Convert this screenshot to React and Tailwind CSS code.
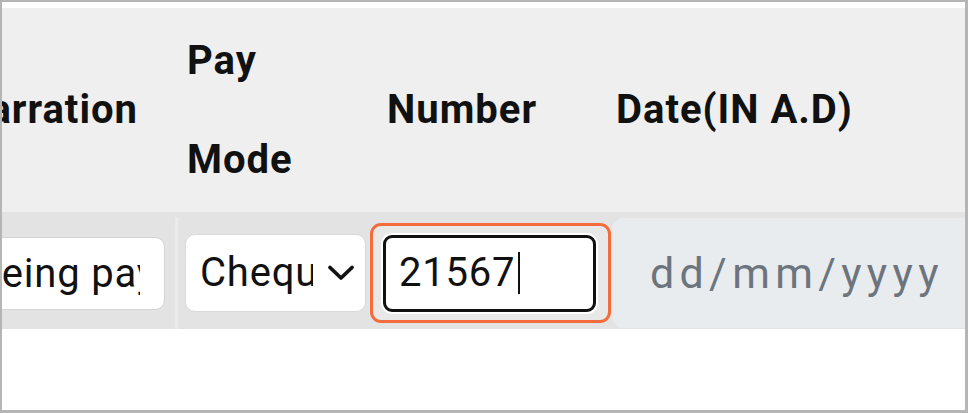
const ChevronDown = () => (
  <svg width="28" height="18" viewBox="0 0 28 18" fill="none">
    <path d="M3 3.5 L14 14 L25 3.5" stroke="#111" strokeWidth="3.8" strokeLinecap="round" strokeLinejoin="round" />
  </svg>
);

export default function App() {
  return (
    <div className="w-[968px] h-[413px] bg-[#b5b5b5] pt-[2px] pl-[2px] pr-[3px] pb-[3px]">
      <div
        className="h-full bg-white overflow-hidden flex flex-col pt-[6px] text-[#111]"
        style={{ fontFamily: "Roboto, 'Liberation Sans', sans-serif" }}
      >
        {/* header */}
        <div className="flex h-[204px] bg-[#efefef] font-bold text-[40px] tracking-[1px] shrink-0">
          <div className="w-[173px] shrink-0 flex items-center justify-end pr-[37px] whitespace-nowrap">
            Narration
          </div>
          <div className="w-[193px] shrink-0 flex items-center pl-[12px]">
            <span className="w-min leading-[99px]">Pay Mode</span>
          </div>
          <div className="w-[244px] shrink-0 flex items-center pl-[19px]">Number</div>
          <div className="flex-1 flex items-center pl-[4px] whitespace-nowrap">Date(IN A.D)</div>
        </div>

        {/* data row */}
        <div className="flex h-[117px] bg-[#e3e3e3] items-center pt-[5px] text-[40px] tracking-[0.8px] shrink-0">
          <div className="w-[173px] shrink-0 h-full flex items-center">
            <input
              readOnly
              value="Being payment"
              className="-ml-[44px] w-[207px] h-[73px] bg-white border border-[#d4d4d4] rounded-[10px] pl-[17px] pr-[24px] outline-none text-[#111]"
            />
          </div>
          <div className="w-[3px] h-full bg-[#ebebeb] shrink-0" />
          <div className="w-[190px] shrink-0 pl-[7px]">
            <div className="w-[181px] h-[78px] bg-white border border-[#d9d9d9] rounded-[10px] flex items-center pl-[14px] pr-[10px]">
              <span className="w-[113px] overflow-hidden whitespace-nowrap">Cheque</span>
              <span className="ml-auto flex items-center">
                <ChevronDown />
              </span>
            </div>
          </div>
          <div className="w-[244px] shrink-0 pl-[2px]">
            <div className="w-[241px] h-[100px] border-[3px] border-[#f46b3c] rounded-[11px] bg-[#e8e8e8] flex items-center pl-[8px]">
              <div className="w-[217px] h-[81px] bg-white rounded-[11px] flex items-center justify-center">
                <div className="w-[213px] h-[77px] bg-white border-[3px] border-[#111] rounded-[9px] flex items-center pl-[13px]">
                  <span>21567</span>
                  <span className="w-[2px] h-[42px] bg-[#111] ml-[3px]" />
                </div>
              </div>
            </div>
          </div>
          <div className="flex-1 h-[110px] bg-[#e9ecef] rounded-l-[12px] flex items-center pl-[38px] text-[43px] text-[#6c757d] tracking-[5.3px] whitespace-nowrap">
            dd/mm/yyyy
          </div>
        </div>
      </div>
    </div>
  );
}
